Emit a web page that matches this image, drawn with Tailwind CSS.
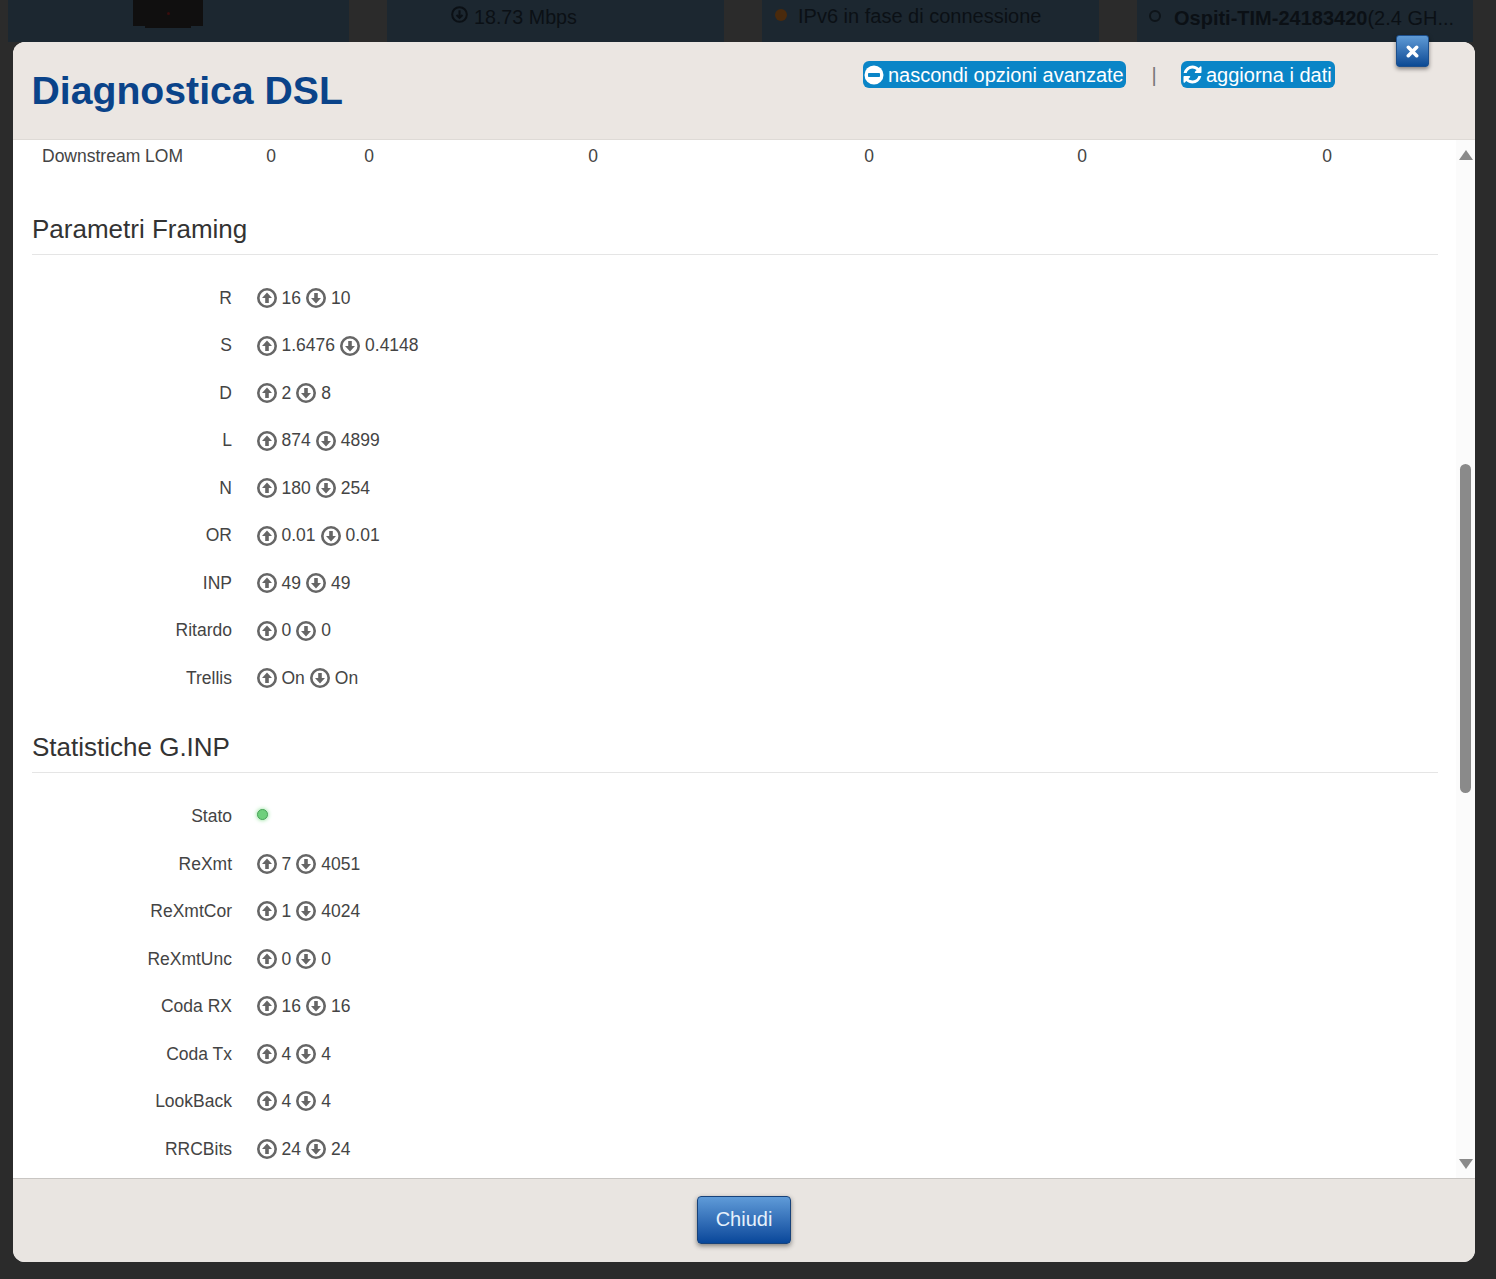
<!DOCTYPE html>
<html lang="it">
<head>
    <meta charset="UTF-8">
    <title>Diagnostica DSL</title>
    <script src="https://cdn.jsdelivr.net/npm/@tailwindcss/browser@4"></script>
</head>
<body class="relative h-[1279px] overflow-hidden bg-[#2b2b2b] font-['Liberation_Sans',Arial,sans-serif] text-[17.5px] text-[#444]">

    <!-- Page behind the overlay -->
    <div class="flex gap-[38px] pl-2 text-[20px] text-[#0b1015]">
        <div class="flex h-[42px] w-[341px] bg-[#1c2730] pl-[125px]">
            <div class="flex h-[28px] w-[70px] flex-col items-center">
                <div class="flex h-[26px] w-[70px] items-center justify-center bg-[#100f0f]"><span class="h-[3px] w-[3px] rounded-full bg-[#3a0d0d]"></span></div>
                <div class="h-[2px] w-[46px] bg-[#100f0f]"></div>
            </div>
        </div>
        <div class="flex h-[42px] w-[337px] items-start gap-[6px] bg-[#1c2730] pt-[3px] pl-[64px] text-[19.7px]">
            <svg class="mt-[3px] h-[17px] w-[17px]" viewBox="0 0 20 20" fill="none" stroke="currentColor" stroke-width="2.4"><circle cx="10" cy="10" r="8.6"/><path d="M10 5v9M6.5 10.5 10 14l3.5-3.5"/></svg>
            <span>18.73 Mbps</span>
        </div>
        <div class="flex h-[42px] w-[337px] items-start bg-[#1c2730] pt-[1px] pl-[13px]">
            <span class="mt-[8px] h-[12px] w-[12px] rounded-full bg-[#4a2a0c]"></span>
            <span class="ml-[11px]">IPv6 in fase di connessione</span>
        </div>
        <div class="flex h-[42px] w-[336px] items-start bg-[#1c2730] pt-[3px] pl-[12px]">
            <span class="mt-[7px] h-[12px] w-[12px] rounded-full border-2 border-[#0e1419]"></span>
            <span class="ml-[13px] whitespace-nowrap"><b>Ospiti-TIM-24183420</b>(2.4 GH...</span>
        </div>
    </div>

    <!-- Modal -->
    <div class="absolute top-[42px] left-[13px] flex h-[1220px] w-[1462px] flex-col rounded-[12px] bg-white">

        <header class="relative h-[98px] shrink-0 rounded-t-[12px] border-b border-[#dedad6] bg-[#ebe6e2]">
            <h1 class="absolute top-[26px] left-[18.5px] text-[39.2px] leading-[46px] font-bold text-[#0a4389]">Diagnostica DSL</h1>
            <div class="absolute top-[19px] left-[850px] flex items-center">
                <a class="flex h-[27px] w-[263px] items-center gap-[4px] rounded-[6px] bg-[#0a85c7] pl-[1px] text-[20px] whitespace-nowrap text-white">
                    <svg class="h-[20px] w-[20px] shrink-0" viewBox="0 0 20 20"><circle cx="10" cy="10" r="9.5" fill="#fff"/><rect x="4" y="8" width="12" height="4" rx="0.8" fill="#0a85c7"/></svg>
                    <span>nascondi opzioni avanzate</span>
                </a>
                <span class="w-[55px] pl-[1px] text-center text-[20px] leading-[20px] text-[#777]">|</span>
                <a class="flex h-[27px] w-[154px] items-center gap-[3px] rounded-[6px] bg-[#0a85c7] pl-[1px] text-[20px] whitespace-nowrap text-white">
                    <svg class="h-[21px] w-[21px] shrink-0" viewBox="0 0 1792 1792" fill="#fff"><path d="M1639 1056q0 5-1 7-64 268-268 434.5t-478 166.5q-146 0-282.5-55t-243.5-157l-129 129q-19 19-45 19t-45-19-19-45v-448q0-26 19-45t45-19h448q26 0 45 19t19 45-19 45l-137 137q71 66 161 102t187 36q134 0 250-65t186-179q11-17 53-117 8-23 30-23h192q13 0 22.5 9.5t9.5 22.5zm25-800v448q0 26-19 45t-45 19h-448q-26 0-45-19t-19-45 19-45l138-138q-148-137-349-137-134 0-250 65t-186 179q-11 17-53 117-8 23-30 23h-199q-13 0-22.5-9.5t-9.5-22.5v-7q65-268 270-434.5t480-166.5q146 0 284 55.5t245 156.5l130-129q19-19 45-19t45 19 19 45z"/></svg>
                    <span>aggiorna i dati</span>
                </a>
            </div>
            <button class="absolute top-[-7px] left-[1383px] flex h-[32px] w-[33px] items-center justify-center rounded-[3px] border border-[#1d4f8c] bg-linear-to-b from-[#5f9bd6] to-[#0a4a94] shadow-[0_2px_4px_rgba(0,0,0,0.45)]">
                <svg class="h-[13px] w-[13px]" viewBox="0 0 14 14" stroke="#fff" stroke-width="3.8" stroke-linecap="round"><path d="M2.5 2.5l9 9M11.5 2.5l-9 9"/></svg>
            </button>
        </header>

        <div class="relative flex-1 overflow-hidden">
            <div class="w-[1406px] pl-[19px] box-content">

                <!-- Last row of the table above -->
                <div class="grid h-[32px] grid-cols-[215px_48px_148px_300px_252px_174px_316px] items-center text-center">
                    <span class="pl-[10px] text-left">Downstream LOM</span>
                    <span>0</span><span>0</span><span>0</span><span>0</span><span>0</span><span>0</span>
                </div>

                <h2 class="mt-[23px] flex h-[60px] w-[1406px] items-center border-b border-[#e5e5e5] pt-[10px] text-[26px] font-normal text-[#333]">Parametri Framing</h2>
                <div class="mt-[19.25px]">
                    <div class="flex h-[47.5px] items-center"><span class="w-[200px] text-right">R</span><span class="ml-[24.5px] flex items-center gap-[5px]"><svg class="h-[20px] w-[20px]" viewBox="0 0 20 20" fill="none"><circle cx="10" cy="10" r="8.7" stroke="#666" stroke-width="2.6"/><path d="M10 4.6 15 10h-3.2v5H8.2v-5H5z" fill="#666"/></svg>16<svg class="h-[20px] w-[20px]" viewBox="0 0 20 20" fill="none"><circle cx="10" cy="10" r="8.7" stroke="#666" stroke-width="2.6"/><path d="M10 15.4 5 10h3.2V5h3.6v5H15z" fill="#666"/></svg>10</span></div>
                    <div class="flex h-[47.5px] items-center"><span class="w-[200px] text-right">S</span><span class="ml-[24.5px] flex items-center gap-[5px]"><svg class="h-[20px] w-[20px]" viewBox="0 0 20 20" fill="none"><circle cx="10" cy="10" r="8.7" stroke="#666" stroke-width="2.6"/><path d="M10 4.6 15 10h-3.2v5H8.2v-5H5z" fill="#666"/></svg>1.6476<svg class="h-[20px] w-[20px]" viewBox="0 0 20 20" fill="none"><circle cx="10" cy="10" r="8.7" stroke="#666" stroke-width="2.6"/><path d="M10 15.4 5 10h3.2V5h3.6v5H15z" fill="#666"/></svg>0.4148</span></div>
                    <div class="flex h-[47.5px] items-center"><span class="w-[200px] text-right">D</span><span class="ml-[24.5px] flex items-center gap-[5px]"><svg class="h-[20px] w-[20px]" viewBox="0 0 20 20" fill="none"><circle cx="10" cy="10" r="8.7" stroke="#666" stroke-width="2.6"/><path d="M10 4.6 15 10h-3.2v5H8.2v-5H5z" fill="#666"/></svg>2<svg class="h-[20px] w-[20px]" viewBox="0 0 20 20" fill="none"><circle cx="10" cy="10" r="8.7" stroke="#666" stroke-width="2.6"/><path d="M10 15.4 5 10h3.2V5h3.6v5H15z" fill="#666"/></svg>8</span></div>
                    <div class="flex h-[47.5px] items-center"><span class="w-[200px] text-right">L</span><span class="ml-[24.5px] flex items-center gap-[5px]"><svg class="h-[20px] w-[20px]" viewBox="0 0 20 20" fill="none"><circle cx="10" cy="10" r="8.7" stroke="#666" stroke-width="2.6"/><path d="M10 4.6 15 10h-3.2v5H8.2v-5H5z" fill="#666"/></svg>874<svg class="h-[20px] w-[20px]" viewBox="0 0 20 20" fill="none"><circle cx="10" cy="10" r="8.7" stroke="#666" stroke-width="2.6"/><path d="M10 15.4 5 10h3.2V5h3.6v5H15z" fill="#666"/></svg>4899</span></div>
                    <div class="flex h-[47.5px] items-center"><span class="w-[200px] text-right">N</span><span class="ml-[24.5px] flex items-center gap-[5px]"><svg class="h-[20px] w-[20px]" viewBox="0 0 20 20" fill="none"><circle cx="10" cy="10" r="8.7" stroke="#666" stroke-width="2.6"/><path d="M10 4.6 15 10h-3.2v5H8.2v-5H5z" fill="#666"/></svg>180<svg class="h-[20px] w-[20px]" viewBox="0 0 20 20" fill="none"><circle cx="10" cy="10" r="8.7" stroke="#666" stroke-width="2.6"/><path d="M10 15.4 5 10h3.2V5h3.6v5H15z" fill="#666"/></svg>254</span></div>
                    <div class="flex h-[47.5px] items-center"><span class="w-[200px] text-right">OR</span><span class="ml-[24.5px] flex items-center gap-[5px]"><svg class="h-[20px] w-[20px]" viewBox="0 0 20 20" fill="none"><circle cx="10" cy="10" r="8.7" stroke="#666" stroke-width="2.6"/><path d="M10 4.6 15 10h-3.2v5H8.2v-5H5z" fill="#666"/></svg>0.01<svg class="h-[20px] w-[20px]" viewBox="0 0 20 20" fill="none"><circle cx="10" cy="10" r="8.7" stroke="#666" stroke-width="2.6"/><path d="M10 15.4 5 10h3.2V5h3.6v5H15z" fill="#666"/></svg>0.01</span></div>
                    <div class="flex h-[47.5px] items-center"><span class="w-[200px] text-right">INP</span><span class="ml-[24.5px] flex items-center gap-[5px]"><svg class="h-[20px] w-[20px]" viewBox="0 0 20 20" fill="none"><circle cx="10" cy="10" r="8.7" stroke="#666" stroke-width="2.6"/><path d="M10 4.6 15 10h-3.2v5H8.2v-5H5z" fill="#666"/></svg>49<svg class="h-[20px] w-[20px]" viewBox="0 0 20 20" fill="none"><circle cx="10" cy="10" r="8.7" stroke="#666" stroke-width="2.6"/><path d="M10 15.4 5 10h3.2V5h3.6v5H15z" fill="#666"/></svg>49</span></div>
                    <div class="flex h-[47.5px] items-center"><span class="w-[200px] text-right">Ritardo</span><span class="ml-[24.5px] flex items-center gap-[5px]"><svg class="h-[20px] w-[20px]" viewBox="0 0 20 20" fill="none"><circle cx="10" cy="10" r="8.7" stroke="#666" stroke-width="2.6"/><path d="M10 4.6 15 10h-3.2v5H8.2v-5H5z" fill="#666"/></svg>0<svg class="h-[20px] w-[20px]" viewBox="0 0 20 20" fill="none"><circle cx="10" cy="10" r="8.7" stroke="#666" stroke-width="2.6"/><path d="M10 15.4 5 10h3.2V5h3.6v5H15z" fill="#666"/></svg>0</span></div>
                    <div class="flex h-[47.5px] items-center"><span class="w-[200px] text-right">Trellis</span><span class="ml-[24.5px] flex items-center gap-[5px]"><svg class="h-[20px] w-[20px]" viewBox="0 0 20 20" fill="none"><circle cx="10" cy="10" r="8.7" stroke="#666" stroke-width="2.6"/><path d="M10 4.6 15 10h-3.2v5H8.2v-5H5z" fill="#666"/></svg>On<svg class="h-[20px] w-[20px]" viewBox="0 0 20 20" fill="none"><circle cx="10" cy="10" r="8.7" stroke="#666" stroke-width="2.6"/><path d="M10 15.4 5 10h3.2V5h3.6v5H15z" fill="#666"/></svg>On</span></div>
                </div>

                <h2 class="mt-[10.75px] flex h-[60px] w-[1406px] items-center border-b border-[#e5e5e5] pt-[10px] text-[26px] font-normal text-[#333]">Statistiche G.INP</h2>
                <div class="mt-[20px]">
                    <div class="flex h-[47.5px] items-center"><span class="w-[200px] text-right">Stato</span><span class="mt-[-4px] ml-[24.5px] h-[11px] w-[11px] rounded-full border border-[#4aa35a] bg-[#6fd07c] shadow-[0_0_4px_#7ddc88]"></span></div>
                    <div class="flex h-[47.5px] items-center"><span class="w-[200px] text-right">ReXmt</span><span class="ml-[24.5px] flex items-center gap-[5px]"><svg class="h-[20px] w-[20px]" viewBox="0 0 20 20" fill="none"><circle cx="10" cy="10" r="8.7" stroke="#666" stroke-width="2.6"/><path d="M10 4.6 15 10h-3.2v5H8.2v-5H5z" fill="#666"/></svg>7<svg class="h-[20px] w-[20px]" viewBox="0 0 20 20" fill="none"><circle cx="10" cy="10" r="8.7" stroke="#666" stroke-width="2.6"/><path d="M10 15.4 5 10h3.2V5h3.6v5H15z" fill="#666"/></svg>4051</span></div>
                    <div class="flex h-[47.5px] items-center"><span class="w-[200px] text-right">ReXmtCor</span><span class="ml-[24.5px] flex items-center gap-[5px]"><svg class="h-[20px] w-[20px]" viewBox="0 0 20 20" fill="none"><circle cx="10" cy="10" r="8.7" stroke="#666" stroke-width="2.6"/><path d="M10 4.6 15 10h-3.2v5H8.2v-5H5z" fill="#666"/></svg>1<svg class="h-[20px] w-[20px]" viewBox="0 0 20 20" fill="none"><circle cx="10" cy="10" r="8.7" stroke="#666" stroke-width="2.6"/><path d="M10 15.4 5 10h3.2V5h3.6v5H15z" fill="#666"/></svg>4024</span></div>
                    <div class="flex h-[47.5px] items-center"><span class="w-[200px] text-right">ReXmtUnc</span><span class="ml-[24.5px] flex items-center gap-[5px]"><svg class="h-[20px] w-[20px]" viewBox="0 0 20 20" fill="none"><circle cx="10" cy="10" r="8.7" stroke="#666" stroke-width="2.6"/><path d="M10 4.6 15 10h-3.2v5H8.2v-5H5z" fill="#666"/></svg>0<svg class="h-[20px] w-[20px]" viewBox="0 0 20 20" fill="none"><circle cx="10" cy="10" r="8.7" stroke="#666" stroke-width="2.6"/><path d="M10 15.4 5 10h3.2V5h3.6v5H15z" fill="#666"/></svg>0</span></div>
                    <div class="flex h-[47.5px] items-center"><span class="w-[200px] text-right">Coda RX</span><span class="ml-[24.5px] flex items-center gap-[5px]"><svg class="h-[20px] w-[20px]" viewBox="0 0 20 20" fill="none"><circle cx="10" cy="10" r="8.7" stroke="#666" stroke-width="2.6"/><path d="M10 4.6 15 10h-3.2v5H8.2v-5H5z" fill="#666"/></svg>16<svg class="h-[20px] w-[20px]" viewBox="0 0 20 20" fill="none"><circle cx="10" cy="10" r="8.7" stroke="#666" stroke-width="2.6"/><path d="M10 15.4 5 10h3.2V5h3.6v5H15z" fill="#666"/></svg>16</span></div>
                    <div class="flex h-[47.5px] items-center"><span class="w-[200px] text-right">Coda Tx</span><span class="ml-[24.5px] flex items-center gap-[5px]"><svg class="h-[20px] w-[20px]" viewBox="0 0 20 20" fill="none"><circle cx="10" cy="10" r="8.7" stroke="#666" stroke-width="2.6"/><path d="M10 4.6 15 10h-3.2v5H8.2v-5H5z" fill="#666"/></svg>4<svg class="h-[20px] w-[20px]" viewBox="0 0 20 20" fill="none"><circle cx="10" cy="10" r="8.7" stroke="#666" stroke-width="2.6"/><path d="M10 15.4 5 10h3.2V5h3.6v5H15z" fill="#666"/></svg>4</span></div>
                    <div class="flex h-[47.5px] items-center"><span class="w-[200px] text-right">LookBack</span><span class="ml-[24.5px] flex items-center gap-[5px]"><svg class="h-[20px] w-[20px]" viewBox="0 0 20 20" fill="none"><circle cx="10" cy="10" r="8.7" stroke="#666" stroke-width="2.6"/><path d="M10 4.6 15 10h-3.2v5H8.2v-5H5z" fill="#666"/></svg>4<svg class="h-[20px] w-[20px]" viewBox="0 0 20 20" fill="none"><circle cx="10" cy="10" r="8.7" stroke="#666" stroke-width="2.6"/><path d="M10 15.4 5 10h3.2V5h3.6v5H15z" fill="#666"/></svg>4</span></div>
                    <div class="flex h-[47.5px] items-center"><span class="w-[200px] text-right">RRCBits</span><span class="ml-[24.5px] flex items-center gap-[5px]"><svg class="h-[20px] w-[20px]" viewBox="0 0 20 20" fill="none"><circle cx="10" cy="10" r="8.7" stroke="#666" stroke-width="2.6"/><path d="M10 4.6 15 10h-3.2v5H8.2v-5H5z" fill="#666"/></svg>24<svg class="h-[20px] w-[20px]" viewBox="0 0 20 20" fill="none"><circle cx="10" cy="10" r="8.7" stroke="#666" stroke-width="2.6"/><path d="M10 15.4 5 10h3.2V5h3.6v5H15z" fill="#666"/></svg>24</span></div>
                </div>
            </div>

            <!-- Scrollbar -->
            <div class="absolute top-0 right-0 bottom-0 w-[19px] bg-[#fbfbfb]">
                <div class="absolute top-[10px] left-[3px] h-0 w-0 border-x-[7px] border-b-[10px] border-x-transparent border-b-[#8a8a8a]"></div>
                <div class="absolute top-[324px] left-[4px] h-[329px] w-[11px] rounded-full bg-[#8a8a8a]"></div>
                <div class="absolute bottom-[9px] left-[3px] h-0 w-0 border-x-[7px] border-t-[10px] border-x-transparent border-t-[#8a8a8a]"></div>
            </div>
        </div>

        <footer class="flex h-[84px] shrink-0 items-start justify-center rounded-b-[12px] border-t border-[#c9c6c3] bg-[#e9e5e1] pt-[17px]">
            <button class="h-[48px] w-[94px] rounded-[4px] border border-[#17427a] bg-linear-to-b from-[#5f9bd8] to-[#07479a] pb-[2px] text-[20px] text-[#e6f1fb] shadow-[0_2px_5px_rgba(0,0,0,0.45)]">Chiudi</button>
        </footer>
    </div>

</body>
</html>
